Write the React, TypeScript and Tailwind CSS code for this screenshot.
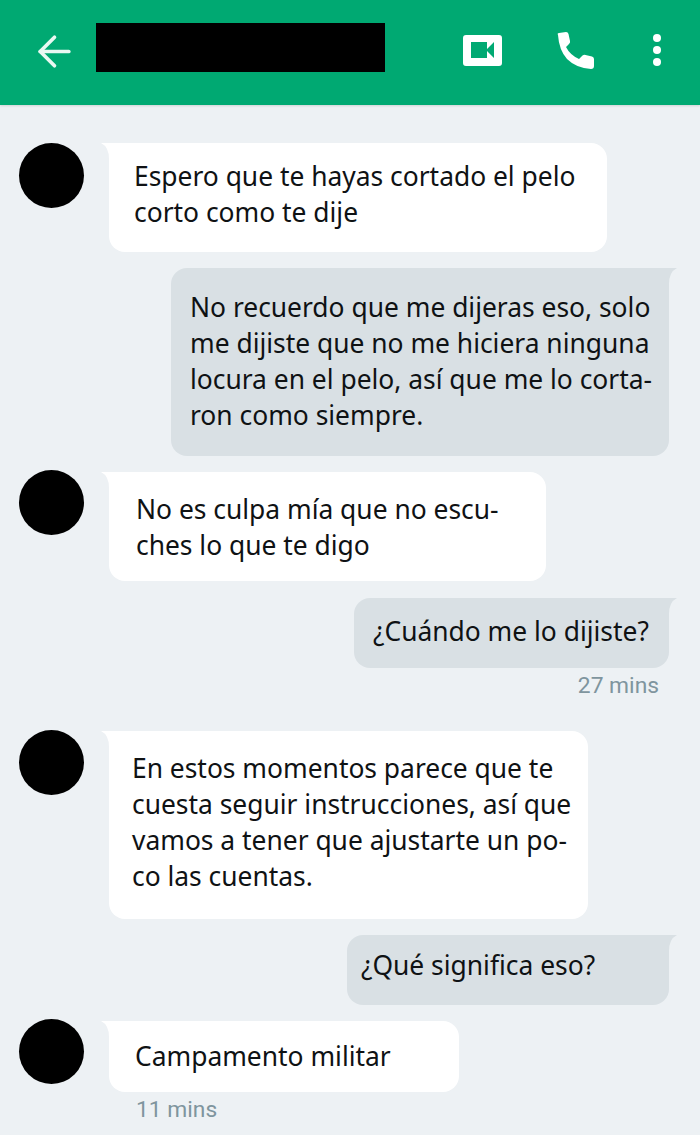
import { ArrowLeft } from "lucide-react";

type Message = {
  id: string;
  lines: string[];
  fromMe?: boolean;
  time?: string;
  rowClass: string;
  bubbleClass: string;
};

const messages: Message[] = [
  {
    id: "m1",
    lines: ["Espero que te hayas cortado el pelo", "corto como te dije"],
    rowClass: "mt-[38px]",
    bubbleClass: "w-[498px] h-[109px] pl-[25px] pt-[15px]",
  },
  {
    id: "m2",
    fromMe: true,
    lines: [
      "No recuerdo que me dijeras eso, solo",
      "me dijiste que no me hiciera ninguna",
      "locura en el pelo, así que me lo corta-",
      "ron como siempre.",
    ],
    rowClass: "mt-[16px]",
    bubbleClass: "w-[498px] h-[188px] pl-[19px] pt-[21px]",
  },
  {
    id: "m3",
    lines: ["No es culpa mía que no escu-", "ches lo que te digo"],
    rowClass: "mt-[14px]",
    bubbleClass: "mt-[2px] w-[437px] h-[109px] pl-[27px] pt-[19px]",
  },
  {
    id: "m4",
    fromMe: true,
    lines: ["¿Cuándo me lo dijiste?"],
    time: "27 mins",
    rowClass: "mt-[17px]",
    bubbleClass: "w-[315px] h-[70px] pl-[19px] pt-[15px]",
  },
  {
    id: "m5",
    lines: [
      "En estos momentos parece que te",
      "cuesta seguir instrucciones, así que",
      "vamos a tener que ajustarte un po-",
      "co las cuentas.",
    ],
    rowClass: "mt-[30px]",
    bubbleClass: "mt-[1px] w-[479px] h-[188px] pl-[23px] pt-[19px]",
  },
  {
    id: "m6",
    fromMe: true,
    lines: ["¿Qué significa eso?"],
    rowClass: "mt-[16px]",
    bubbleClass: "w-[322px] h-[70px] pl-[14px] pt-[12px]",
  },
  {
    id: "m7",
    lines: ["Campamento militar"],
    time: "11 mins",
    rowClass: "mt-[14px]",
    bubbleClass: "mt-[2px] w-[350px] h-[71px] pl-[26px] pt-[17px]",
  },
];

function Bubble({ message }: { message: Message }) {
  const tone = message.fromMe ? "bg-[#d9e0e4]" : "bg-white";
  return (
    <div
      className={`relative rounded-[16px] text-[26.4px] leading-[36px] text-[#0f1214] [font-variant-ligatures:none] ${tone} ${message.bubbleClass}`}
    >
      {message.fromMe ? (
        <svg className="absolute -right-[8px] top-0" width="24" height="16" viewBox="0 0 24 16" aria-hidden>
          <path d="M0 0H24Q16 4 16 16H0Z" fill="#d9e0e4" />
        </svg>
      ) : (
        <svg className="absolute -left-[8px] top-0" width="24" height="16" viewBox="0 0 24 16" aria-hidden>
          <path d="M24 0H0Q8 4 8 16H24Z" fill="#ffffff" />
        </svg>
      )}
      {message.lines.map((line) => (
        <p key={line} className="relative whitespace-nowrap">
          {line}
        </p>
      ))}
    </div>
  );
}

function Row({ message }: { message: Message }) {
  if (message.fromMe) {
    return (
      <div className={message.rowClass}>
        <div className="flex justify-end pr-[31px]">
          <Bubble message={message} />
        </div>
        {message.time ? (
          <p className="mt-[4px] pr-[41px] text-right font-['Roboto',sans-serif] text-[22.8px] leading-[28px] text-[#7f959e]">
            {message.time}
          </p>
        ) : null}
      </div>
    );
  }

  return (
    <div className={message.rowClass}>
      <div className="flex items-start pl-[19px]">
        <div className="h-[65px] w-[65px] shrink-0 rounded-full bg-black" />
        <div className="ml-[25px]">
          <Bubble message={message} />
        </div>
      </div>
      {message.time ? (
        <p className="mt-[4px] pl-[136px] font-['Roboto',sans-serif] text-[22.8px] leading-[28px] text-[#7f959e]">
          {message.time}
        </p>
      ) : null}
    </div>
  );
}

export default function App() {
  return (
    <div className="h-[1135px] w-[700px] overflow-hidden bg-[#edf1f4] font-['Noto_Sans','Lato',sans-serif]">
      <header className="flex h-[105px] items-start bg-[#00a972] shadow-[0_1px_2px_rgba(0,0,0,0.12)]">
        <ArrowLeft className="ml-[30px] mt-[27px] h-[49px] w-[49px] text-[#e9f8f2]" strokeWidth={1.8} aria-hidden />
        <div className="ml-[17px] mt-[23px] h-[49px] w-[289px] bg-black" />
        <svg className="ml-[78px] mt-[35px]" width="39" height="31" viewBox="0 0 39 31" aria-hidden>
          <path
            fillRule="evenodd"
            d="M3 0H36Q39 0 39 3V28Q39 31 36 31H3Q0 31 0 28V3Q0 0 3 0ZM8 7V23H24V16L31 23V7L24 14V7Z"
            fill="#ffffff"
          />
        </svg>
        <svg className="ml-[54px] mt-[32px]" width="38" height="37" viewBox="0 0 38 37" aria-hidden>
          <path
            d="M2 3Q1 1 3 1L10 0Q12 0 12.500 2L14 9Q14.500 10.500 13 12L10 15Q14 23 23 27L26.500 23.500Q28 22.500 29.500 23L36 24.500Q38 25 38 27V34Q38 37 35 37Q20 36 11 27Q3 18 2 3Z"
            fill="#ffffff"
          />
        </svg>
        <div className="ml-[59px] mt-[34px] flex flex-col gap-[4px]">
          <span className="h-[8px] w-[8px] rounded-full bg-white" />
          <span className="h-[8px] w-[8px] rounded-full bg-white" />
          <span className="h-[8px] w-[8px] rounded-full bg-white" />
        </div>
      </header>

      {messages.map((message) => (
        <Row key={message.id} message={message} />
      ))}
    </div>
  );
}
